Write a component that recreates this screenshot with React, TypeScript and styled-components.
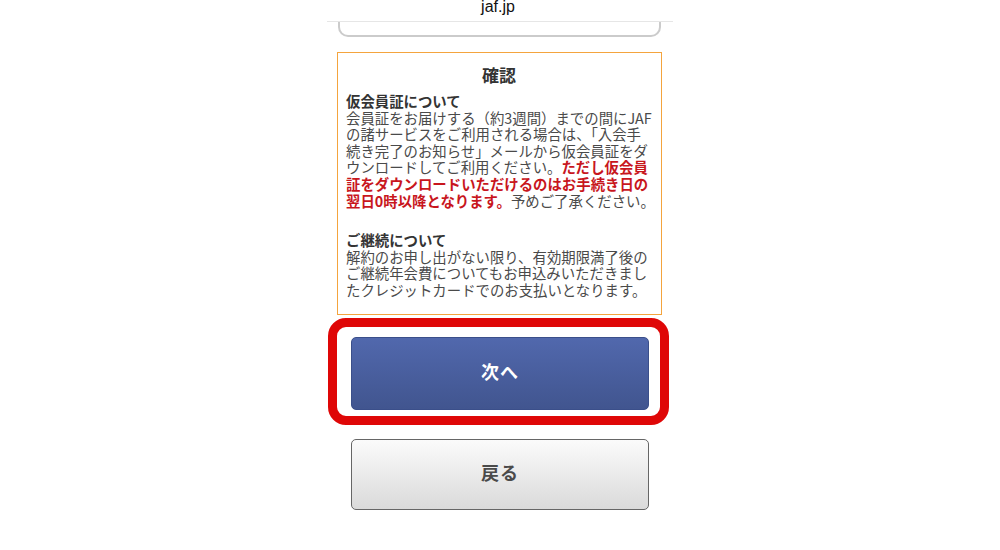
import React, { FunctionComponent } from 'react'
import styled, { createGlobalStyle } from 'styled-components'

const GlobalStyle = createGlobalStyle`
  html, body {
    margin: 0;
    padding: 0;
    background: #fff;
  }
  body {
    font-family: "Noto Sans CJK JP", "Noto Sans", sans-serif;
  }
`
const Page = styled.div`
  width: 1000px;
  height: 550px;
  overflow: hidden;
  display: flex;
  justify-content: center;
  background: #fff;
`
const Column = styled.div`
  width: 346px;
  display: flex;
  flex-direction: column;
  align-items: center;
`
const Header = styled.div`
  width: 100%;
  height: 21px;
  border-bottom: 1px solid #e6e6e6;
  display: flex;
  justify-content: center;
  overflow: hidden;
`
const HeaderTitle = styled.div`
  font-family: "Liberation Sans", "Noto Sans", sans-serif;
  font-size: 16px;
  line-height: 13px;
  color: #111;
  margin-left: -4px;
`
const PrevCard = styled.div`
  box-sizing: border-box;
  width: 323px;
  height: 15px;
  border: 2px solid #cbcbcb;
  border-top: none;
  border-radius: 0 0 10px 10px;
  margin-left: -1px;
`
const NoticeBox = styled.div`
  box-sizing: border-box;
  width: 325px;
  height: 263px;
  margin-top: 15px;
  margin-left: -1px;
  border: 1px solid #f4a43e;
  padding: 11px 9px 0 8px;
  color: #4a4a4a;
`
const NoticeTitle = styled.div`
  text-align: center;
  font-size: 17px;
  line-height: 22px;
  font-weight: 700;
  color: #333;
  margin-bottom: 7px;
`
const Section = styled.div<{ $gap?: number }>`
  margin-top: ${p => p.$gap || 0}px;
  font-size: 14.4px;
  line-height: 16.6px;
  white-space: nowrap;
`
const SectionHeading = styled.div`
  font-weight: 700;
  color: #333;
`
const Strong = styled.span`
  font-weight: 700;
  color: #c8161d;
`
const HighlightFrame = styled.div`
  box-sizing: border-box;
  width: 341px;
  height: 107px;
  margin-top: 3px;
  margin-left: -3px;
  border: 9px solid #df0707;
  border-radius: 18px;
  display: flex;
  justify-content: center;
  padding: 10px 0 0 3px;
`
const Button = styled.button<{ $variant: 'primary' | 'secondary' }>`
  box-sizing: border-box;
  width: 298px;
  height: ${p => (p.$variant === 'primary' ? 73 : 71)}px;
  padding: 0 0 ${p => (p.$variant === 'primary' ? 6 : 5)}px;
  border-radius: 5px;
  font-family: "Noto Sans CJK JP", "Noto Sans", sans-serif;
  font-size: 18px;
  font-weight: 700;
  letter-spacing: 1px;
  cursor: pointer;
  border: 1px solid ${p => (p.$variant === 'primary' ? '#3b4f8a' : '#666')};
  color: ${p => (p.$variant === 'primary' ? '#fff' : '#4a4a4a')};
  background: ${p =>
    p.$variant === 'primary'
      ? 'linear-gradient(to bottom, #5168ad, #41558f)'
      : 'linear-gradient(to bottom, #fbfbfb, #dadada)'};
`
const BackButton = styled(Button)`
  margin-top: 14px;
`

const App: FunctionComponent = () => {
  return (
    <Page>
      <GlobalStyle />
      <Column>
        <Header>
          <HeaderTitle>jaf.jp</HeaderTitle>
        </Header>
        <PrevCard />
        <NoticeBox>
          <NoticeTitle>確認</NoticeTitle>
          <Section>
            <SectionHeading>仮会員証について</SectionHeading>
            会員証をお届けする（約3週間）までの間にJAF<br />
            の諸サービスをご利用される場合は、「入会手<br />
            続き完了のお知らせ」メールから仮会員証をダ<br />
            ウンロードしてご利用ください。<Strong>ただし仮会員<br />
            証をダウンロードいただけるのはお手続き日の<br />
            翌日0時以降となります。</Strong>予めご了承ください。
          </Section>
          <Section $gap={23}>
            <SectionHeading>ご継続について</SectionHeading>
            解約のお申し出がない限り、有効期限満了後の<br />
            ご継続年会費についてもお申込みいただきまし<br />
            たクレジットカードでのお支払いとなります。
          </Section>
        </NoticeBox>
        <HighlightFrame>
          <Button $variant="primary">次へ</Button>
        </HighlightFrame>
        <BackButton $variant="secondary">戻る</BackButton>
      </Column>
    </Page>
  )
}

export default App
